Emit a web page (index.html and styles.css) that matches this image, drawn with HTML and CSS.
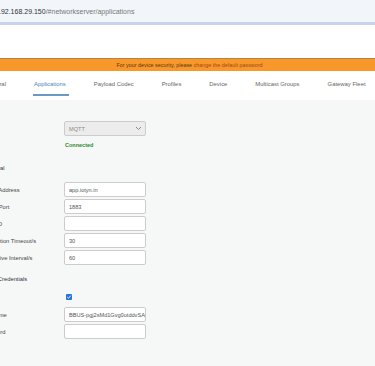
FILE: index.html
```html
<!DOCTYPE html>
<html>
<head>
<meta charset="utf-8">
<link rel="stylesheet" href="styles.css">
</head>
<body>
<div class="addr">
  <span class="url"><span class="host">192.168.29.150</span><span class="path">/#networkserver/applications</span></span>
</div>
<div class="blank"></div>
<div class="banner">For your device security, please <span class="link">change the default password</span></div>
<nav class="tabs">
  <span class="tab">General</span>
  <span class="tab active">Applications</span>
  <span class="tab">Payload Codec</span>
  <span class="tab">Profiles</span>
  <span class="tab">Device</span>
  <span class="tab">Multicast Groups</span>
  <span class="tab">Gateway Fleet</span>
</nav>
<main class="content">
  <div class="row row-select">
    <span class="label">Type</span>
    <div class="select"><span>MQTT</span><svg width="7" height="5" viewBox="0 0 7 5"><path d="M1 1 L3.5 3.5 L6 1" fill="none" stroke="#888" stroke-width="1"/></svg></div>
  </div>
  <div class="row row-status">
    <span class="label"></span>
    <span class="status">Connected</span>
  </div>
  <div class="section">General</div>
  <div class="row"><span class="label">Server Address</span><div class="input">app.iotyn.in</div></div>
  <div class="row"><span class="label">Server Port</span><div class="input">1883</div></div>
  <div class="row"><span class="label">Client ID</span><div class="input"></div></div>
  <div class="row"><span class="label">Connection Timeout/s</span><div class="input">30</div></div>
  <div class="row"><span class="label">Keep Alive Interval/s</span><div class="input">60</div></div>
  <div class="section sec2">User Credentials</div>
  <div class="row row-check"><span class="label">Enable</span><span class="check"><svg width="6" height="6" viewBox="0 0 6 6"><path d="M1.2 3 L2.5 4.3 L4.8 1.6" fill="none" stroke="#fff" stroke-width="0.9"/></svg></span></div>
  <div class="row"><span class="label">Username</span><div class="input">BBUS-pgj2sMd1Gvg0otddvSAr</div></div>
  <div class="row"><span class="label">Password</span><div class="input"></div></div>
</main>
</body>
</html>
```
FILE: styles.css
```css
html, body {
  margin: 0;
  padding: 0;
}
body {
  width: 375px;
  height: 366px;
  overflow: hidden;
  font-family: "Liberation Sans", Arial, sans-serif;
  background: #f6f8f8;
}
.addr {
  height: 22px;
  background: #f2f6fb;
  border-bottom: 3px solid #c6d5ee;
  display: flex;
  align-items: center;
  overflow: hidden;
  white-space: nowrap;
}
.url {
  margin-left: -3px;
  font-size: 7px;
}
.host { color: #333; }
.path { color: #777; }
.blank {
  height: 33px;
  background: #fff;
}
.banner {
  height: 12px;
  border-top: 1px solid #b5834a;
  background: #f8972a;
  color: #5b3a10;
  font-size: 5.4px;
  display: flex;
  align-items: center;
  justify-content: center;
  padding-left: 4px;
  white-space: pre;
}
.banner .link {
  color: #a34a1a;
}
.tabs {
  height: 29px;
  background: #fff;
  display: flex;
  align-items: center;
  margin-left: -29px;
  white-space: nowrap;
  font-size: 5.9px;
  color: #666;
}
.tab {
  position: relative;
  padding: 0 14px;
  height: 29px;
  line-height: 27px;
}
.tab.active {
  color: #4a86bd;
}
.tab.active::after {
  content: "";
  position: absolute;
  left: 13px;
  right: 11px;
  bottom: 4px;
  height: 2px;
  background: #6a9ac4;
}
.content {
  padding-top: 21px;
  margin-left: -20px;
  font-size: 5.8px;
  color: #444;
}
.row {
  display: flex;
  align-items: center;
  height: 17px;
  white-space: nowrap;
}
.label {
  width: 84px;
  flex: none;
}
.select, .input {
  width: 82px;
  height: 15px;
  box-sizing: border-box;
  border: 1px solid #ccc;
  border-radius: 2px;
  background: #fff;
  display: flex;
  align-items: center;
  padding-left: 4px;
  color: #555;
  font-size: 5.6px;
  overflow: hidden;
}
.select {
  background: #ececec;
  justify-content: space-between;
  padding-right: 3px;
  color: #888;
}
.row-select { height: 15px; }
.row-status { height: 18px; }
.status {
  color: #2f8a2f;
  font-weight: bold;
  font-size: 5.5px;
  padding-left: 1px;
}
.section {
  height: 26px;
  line-height: 26px;
  padding-left: 4px;
  color: #333;
  margin-top: 1px;
}
.sec2 { margin-top: 4px; height: 18px; line-height: 18px; }
.row-check { height: 18px; }
.check {
  width: 6px;
  height: 6px;
  background: #2673d9;
  border-radius: 1px;
  margin-left: 2px;
  display: flex;
  align-items: center;
  justify-content: center;
}
```
